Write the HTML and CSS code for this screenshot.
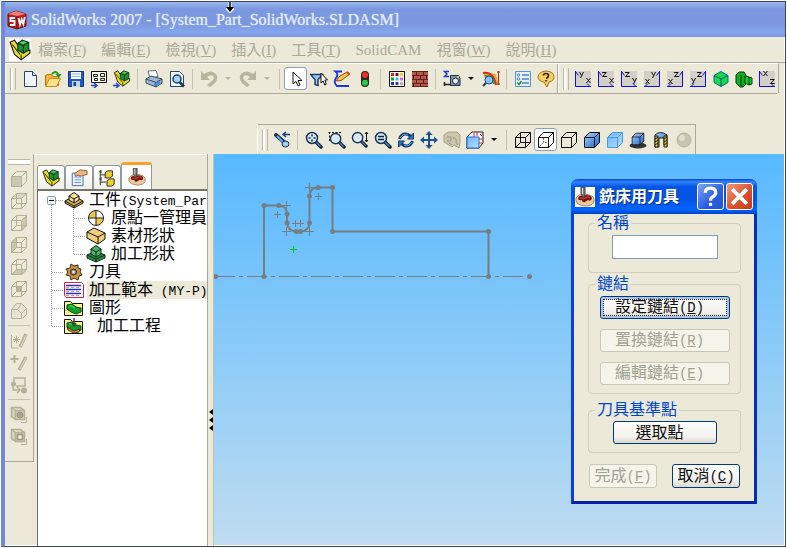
FILE: index.html
```html
<!DOCTYPE html>
<html lang="zh-Hant">
  <head>
    <meta charset="UTF-8">
    <meta name="viewport" content="width=device-width, initial-scale=1.0">
    <title>SolidWorks 2007</title>
    <link rel="stylesheet" href="styles.css">
  </head>
  <body>
    <!-- shared shapes -->
    <svg class="defs" aria-hidden="true">
      <defs>
        <linearGradient id="blue" x1="0" y1="0" x2="1" y2="1"><stop offset="0" stop-color="#a9d4fb"/><stop offset="1" stop-color="#1f62c4"/></linearGradient>
        <linearGradient id="lightblue" x1="0" y1="0" x2="1" y2="1"><stop offset="0" stop-color="#6db5fa"/><stop offset="1" stop-color="#b4e0ff"/></linearGradient>
        <symbol id="wire" viewBox="0 0 18 18"><path d="M1.500 6.500h10v10h-10zM6.500 1.500h10v10h-10zM1.500 6.500l5-5M11.500 6.500l5-5M11.500 16.500l5-5M1.500 16.500l5-5" fill="none" stroke="currentColor"/></symbol>
        <symbol id="box" viewBox="0 0 18 18"><path d="M1.500 6.500l5-5h10v10l-5 5h-10zM1.500 6.500h10v10M11.500 6.500l5-5" stroke="currentColor" stroke-linejoin="round"/></symbol>
        <symbol id="lens" viewBox="0 0 18 18"><path d="M10.500 10.500l5.500 5.500" stroke="#123" stroke-width="3.500" stroke-linecap="round"/><path d="M11 11l4.500 4.500" stroke="#4a90d8" stroke-width="1.200"/><circle cx="7" cy="7" r="5.500" fill="#d6ebfb" stroke="#1c3450" stroke-width="1.500"/></symbol>
        <symbol id="undo" viewBox="0 0 18 18"><path d="M1 1v9h9L7 7q3-3 6-1 2 2-1 5l-5 4 3 2 5-4q4-5 1-9-5-5-12 0z" fill="#b9b59c"/></symbol>
        <symbol id="corner-l" viewBox="0 0 18 18"><path d="M1 1h16v16H1z" fill="#d2d0c8"/><path d="M1.500 1v15.500H17M1.500 1.500l3 4M13 13.500l3 3" fill="none" stroke="#1010e0"/></symbol>
        <symbol id="corner-r" viewBox="0 0 18 18"><path d="M1 1h16v16H1z" fill="#d2d0c8"/><path d="M16.500 1v15.500H1M16.500 1.500l-3 4M5 13.500l-3 3" fill="none" stroke="#1010e0"/></symbol>
        <symbol id="gx" viewBox="0 0 5 5"><path d="M.5 0l4 5M4.500 0l-4 5" stroke="#111" fill="none"/></symbol>
        <symbol id="gy" viewBox="0 0 5 6"><path d="M.5 0l2 3.500M4.500 0l-3 6" stroke="#111" fill="none"/></symbol>
        <symbol id="gz" viewBox="0 0 5 5"><path d="M0 .5h4.200L.5 4.500H5" stroke="#111" fill="none"/></symbol>
        <symbol id="assembly" viewBox="0 0 20 20"><path d="M1 3l4-2 4 6 2 4 8-1v3l-8 6-6-5z" fill="#f6d52f" stroke="#111"/><path d="M8 4l4-3 6 2v7l-5 3-5-3z" fill="#1d8d37" stroke="#073b12"/><path d="M8 4l5 2 5-3M13 6v7M3 5l7 9M11 14v5" stroke="#083d14" fill="none"/><path d="M10 3.500l3-1.500 3 1-3 1.500z" fill="#5ed873"/></symbol>
        <symbol id="cutter" viewBox="0 0 20 20"><path d="M1 11q2-4 8-4 10 1 10 5v3q-2 4-9 4-8-1-9-5z" fill="#e8cc9a" stroke="#a8865a"/><path d="M3 11q1-3 5-2l3-1q5 0 6 3-1 4-4 2l-3 2q-3 1-3-2-4 1-4-2" fill="#7c1212"/><path d="M5 11q4 2 7-1 2 0 3 1" stroke="#d8503c" fill="none"/><path d="M6 0h4v6l-1 5H8L6 6z" fill="#777" stroke="#444"/><path d="M7.500 1v6" stroke="#ddd"/></symbol>
        <symbol id="twig-line" viewBox="0 0 22 18"><path d="M9.500 0v18" class="twig-dots"/></symbol>
        <symbol id="twig-mid" viewBox="0 0 22 18"><path d="M9.500 0v18M10 9.500h12" class="twig-dots"/></symbol>
        <symbol id="twig-end" viewBox="0 0 22 18"><path d="M9.500 0v9M10 9.500h12" class="twig-dots"/></symbol>
        <symbol id="twig-open" viewBox="0 0 22 18"><path d="M9.500 14v4M14 9.500h8" class="twig-dots"/><rect x="5.500" y="5.500" width="8" height="8" rx="1" fill="#f4f2ea" stroke="#7d97b5"/><path d="M7 9.500h5" stroke="#111"/></symbol>
        <symbol id="part-pic" viewBox="0 0 20 18"><path d="M.5 2.500h6l2 2h10v12H.5z" fill="#fdf58e" stroke="#111"/><path d="M3 6l5-1 4 3 5 1v4l-5 2-5-2-4-3z" fill="#12a02d" stroke="#064a12"/><path d="M5 7l3 0 3 2" stroke="#5be070" fill="none"/></symbol>
      </defs>
    </svg>

    <div class="app">
      <header class="titlebar">
        <svg class="logo" viewBox="0 0 20 20"><path d="M1 4l8-3 10 3v12l-9 3-9-3z" fill="#b81f1f" stroke="#701010"/><path d="M1 4l8-3 10 3-9 2z" fill="#ef7c70"/><path d="M10 6v13" stroke="#701010"/><path d="M8 8H3.500v3H7.500v4H3M11.500 8l1.500 6.500 1.700-5 1.600 4.500 1.500-7" fill="none" stroke="#fff" stroke-width="1.800"/></svg>
        <h1>SolidWorks 2007 - [System_Part_SolidWorks.SLDASM]</h1>
        <svg class="cursor" viewBox="0 0 10 11"><path d="M5 0v9M1.500 6L5 9.500 8.500 6" fill="none" stroke="#fff" stroke-width="3"/><path d="M5 0v7" stroke="#000" stroke-width="1.500"/><path d="M1 5h8L5 10z"/></svg>
      </header>

      <nav class="menubar">
        <svg class="menu-icon"><use href="#assembly"/></svg>
        <a href="#">檔案(<u>F</u>)</a>
        <a href="#">編輯(<u>E</u>)</a>
        <a href="#">檢視(<u>V</u>)</a>
        <a href="#">插入(<u>I</u>)</a>
        <a href="#">工具(<u>T</u>)</a>
        <a href="#">SolidCAM</a>
        <a href="#">視窗(<u>W</u>)</a>
        <a href="#">說明(<u>H</u>)</a>
      </nav>

      <div class="toolbars">
        <div class="toolbar">
          <span class="grip"></span>
          <button class="tool" aria-label="New"><svg viewBox="0 0 18 18"><path d="M3.500 1.500h8l4 4v11h-12z" fill="#f2f7ff" stroke="#24436e"/><path d="M11.500 1.500v4h4" fill="#c9dcf2" stroke="#24436e"/></svg></button>
          <button class="tool" aria-label="Open"><svg viewBox="0 0 18 18"><path d="M1.500 16V5.500l2-1h4l1 2h6v9z" fill="#f4b63e" stroke="#b9760c"/><path d="M1.500 16.500l4-8h11l-4 8z" fill="#ffe389" stroke="#c98a16"/><path d="M8 4q4-4 6 0" fill="none" stroke="#1c9a2c" stroke-width="2"/><path d="M11.500 4h6L15 8z" fill="#1c9a2c"/></svg></button>
          <button class="tool" aria-label="Save"><svg viewBox="0 0 18 18"><path d="M1.500 1.500h15v15h-15z" fill="#2458c8" stroke="#123488"/><path d="M4 2h10v7H4z" fill="#f4f8ff"/><path d="M5 4h8M5 6.500h8" stroke="#9ab3dc"/><path d="M5 11h8v6H5z" fill="#c8d4e8"/><path d="M6.500 12h2.500v4H6.500z" fill="#1c3f98"/></svg></button>
          <button class="tool" aria-label="Make drawing"><svg viewBox="0 0 18 18"><path d="M1.500 1.500h15v11h-15z" fill="#fff" stroke="#111"/><path d="M3.500 4.500h4v2h-4zM10.500 3.500h4v3h-4zM4.500 8.500h3v2h-3zM10.500 8.500h4v2h-4z" fill="#f4e9b8" stroke="#222"/><path d="M1 15.500h5M4 13l3 2.500L4 18" stroke="#1b49c8" fill="none" stroke-width="1.500"/></svg></button>
          <button class="tool" aria-label="Make assembly"><svg viewBox="0 0 18 18"><use href="#assembly" width="18" height="17"/><path d="M0 15.500h5M3 13l3 2.500L3 18" stroke="#1b49c8" fill="none" stroke-width="1.500"/></svg></button>
          <span class="sep"></span>
          <button class="tool" aria-label="Print"><svg viewBox="0 0 18 18"><path d="M3 1l8-.500 2 6-8 2z" fill="#fff" stroke="#56718f"/><path d="M1 9l5-3 11 3v4l-6 4L1 13z" fill="#9fb8d2" stroke="#34495f"/><path d="M1 9l10 3.500L17 9M11 12.500V17" stroke="#34495f" fill="none"/><path d="M9 15l6-3" stroke="#3d8be8" stroke-width="2"/></svg></button>
          <button class="tool" aria-label="Print preview"><svg viewBox="0 0 18 18"><path d="M2.500 1.500h9l4 4v11h-13z" fill="#f4f8ff" stroke="#24436e"/><path d="M11 11.500l5 5" stroke="#1d3e60" stroke-width="2.500"/><circle cx="9" cy="9" r="4" fill="#9fd4f5" stroke="#1d3e60" stroke-width="1.500"/></svg></button>
          <span class="sep"></span>
          <button class="tool" aria-label="Undo" disabled><svg><use href="#undo"/></svg></button>
          <button class="drop" aria-label="Undo list" disabled><svg viewBox="0 0 6 4"><path d="M0 0h6L3 3z"/></svg></button>
          <button class="tool" aria-label="Redo" disabled><svg viewBox="0 0 18 18"><g transform="translate(18 0) scale(-1 1)"><use href="#undo" width="18" height="18"/></g></svg></button>
          <button class="drop" aria-label="Redo list" disabled><svg viewBox="0 0 6 4"><path d="M0 0h6L3 3z"/></svg></button>
          <span class="sep"></span>
          <button class="tool pressed" aria-label="Select"><svg viewBox="0 0 18 18"><path d="M6 2v12l3-2.500 2 4.500 2-1-2-4.500h4z" fill="#fff" stroke="#111"/></svg></button>
          <button class="tool" aria-label="Selection filter"><svg viewBox="0 0 18 18"><path d="M.500 4.500h12l-4.500 5v6l-3-1v-5z" fill="#9cc9f0" stroke="#1f3f6b" stroke-width="1.500"/><path d="M11 3v10l2.200-2 1.500 4 1.500-.8L15 10h2.500z" fill="#fff" stroke="#111"/></svg></button>
          <button class="tool" aria-label="Sketch"><svg viewBox="0 0 18 18"><path d="M9 1.500H2.500Q6 4 3 8t1 8h12" fill="none" stroke="#1b35d8" stroke-width="1.800"/><path d="M3.500 11l2-4L14 2l2.500 2.500L8 10.500z" fill="#f7c548" stroke="#8a4a10"/><path d="M14 2l2.500 2.500" stroke="#d23c20" stroke-width="2"/></svg></button>
          <button class="tool" aria-label="Rebuild"><svg viewBox="0 0 18 18"><rect x="5" y="1" width="8" height="16" rx="4" fill="#262626"/><circle cx="9" cy="5" r="3" fill="#f03020"/><circle cx="9" cy="12.800" r="3" fill="#28d040"/></svg></button>
          <span class="sep"></span>
          <button class="tool" aria-label="Edit color"><svg viewBox="0 0 18 18"><path d="M1.500 1.500h15v15h-15z" fill="#fff" stroke="#111"/><path d="M3 3h3v3H3z" fill="#e02020"/><path d="M7.500 3h3v3h-3z" fill="#801010"/><path d="M12 3h3v3h-3z" fill="#f0d020"/><path d="M3 7.500h3v3H3z" fill="#18a020"/><path d="M7.500 7.500h3v3h-3z" fill="#20c8d0"/><path d="M12 7.500h3v3h-3z" fill="#e060d8"/><path d="M3 12h3v3H3z" fill="#1830d8"/><path d="M7.500 12h3v3h-3z" fill="#5030b0"/><path d="M12 12h3v3h-3z" fill="#b0b0b0"/></svg></button>
          <button class="tool" aria-label="Texture"><svg viewBox="0 0 18 18"><path d="M1 1h16v16H1z" fill="#b5584c"/><path d="M1 1.500h16M1 5.500h16M1 9.500h16M1 13.500h16M1 16.500h16M5.500 1v4M12.500 1v4M2.500 5v4M9.500 5v4M15.500 5v4M5.500 9v4M12.500 9v4M2.500 13v4M9.500 13v4" stroke="#5f211a"/></svg></button>
          <span class="sep"></span>
          <button class="tool" aria-label="Measure"><svg viewBox="0 0 18 18"><path d="M6 1.500H1.500L4 4 1.500 6.500H6" fill="none" stroke="#1b35c8" stroke-width="1.300"/><path d="M7.500 5.500h8l1.500 3v7H7.500z" fill="#7d94ac" stroke="#18304c"/><circle cx="12.500" cy="11" r="3" fill="#e4f0fa" stroke="#18304c"/><path d="M1 14.500h7M1.500 12v4" stroke="#222" stroke-width="1.500"/><path d="M14 6h2v2h-2z" fill="#f0d040"/></svg></button>
          <button class="drop" aria-label="Measure list"><svg viewBox="0 0 6 4"><path d="M0 0h6L3 3z"/></svg></button>
          <button class="tool" aria-label="Analysis"><svg viewBox="0 0 18 18"><path d="M1 2l5 1 8 1 3 11-4-1-3-5-8-2z" fill="#e8b030"/><path d="M1 3q10-2 13 12" fill="none" stroke="#e02818" stroke-width="2"/><path d="M3 6q8-1 9 8" fill="none" stroke="#24a850" stroke-width="2"/><path d="M16.500 1v14M15 2h3M15 14h3" stroke="#c02018"/><path d="M5 12l-4 4" stroke="#1d3e60" stroke-width="2"/><circle cx="7" cy="10" r="4" fill="#88c4f2" stroke="#205088"/></svg></button>
          <span class="sep"></span>
          <button class="tool" aria-label="Options"><svg viewBox="0 0 18 18"><path d="M1.500 1.500h15v15h-15z" fill="#e4f0fd" stroke="#5a92d8"/><path d="M8 5h7M8 9h7M8 13h7" stroke="#4c84cc" stroke-width="1.500"/><circle cx="4.500" cy="5" r="1.200" fill="none" stroke="#4c84cc"/><circle cx="4.500" cy="9" r="1.200" fill="none" stroke="#4c84cc"/><path d="M3 12.500l2 2 2.500-3.500" fill="none" stroke="#18a020" stroke-width="1.500"/></svg></button>
          <button class="tool" aria-label="Help"><svg viewBox="0 0 18 18"><path d="M9 1q8 .5 8 6 0 4-5 5l-2 5-3-5Q1 11 1 7q1-5.500 8-6" fill="#f7cf62" stroke="#a87010"/><path d="M6.500 5.500q0-2 2.500-2t2.500 2-2.500 3M9 10v1.500" fill="none" stroke="#332200" stroke-width="1.700"/></svg></button>
        </div>
        <div class="toolbar">
          <span class="grip"></span>
          <button class="tool" aria-label="View YX"><svg viewBox="0 0 18 18"><use href="#corner-l" width="18" height="18"/><use href="#gy" x="5" y="2" width="5" height="6"/><use href="#gx" x="12" y="8" width="5" height="5"/></svg></button>
          <button class="tool" aria-label="View ZX"><svg viewBox="0 0 18 18"><use href="#corner-l" width="18" height="18"/><use href="#gz" x="5" y="2" width="5" height="5"/><use href="#gx" x="12" y="8" width="5" height="5"/></svg></button>
          <button class="tool" aria-label="View ZY"><svg viewBox="0 0 18 18"><use href="#corner-l" width="18" height="18"/><use href="#gz" x="5" y="2" width="5" height="5"/><use href="#gy" x="12" y="8" width="5" height="6"/></svg></button>
          <button class="tool" aria-label="View XY"><svg viewBox="0 0 18 18"><use href="#corner-r" width="18" height="18"/><use href="#gy" x="8" y="2" width="5" height="6"/><use href="#gx" x="2" y="9" width="5" height="5"/></svg></button>
          <button class="tool" aria-label="View XZ"><svg viewBox="0 0 18 18"><use href="#corner-r" width="18" height="18"/><use href="#gz" x="8" y="2" width="5" height="5"/><use href="#gx" x="2" y="9" width="5" height="5"/></svg></button>
          <button class="tool" aria-label="View YZ"><svg viewBox="0 0 18 18"><use href="#corner-r" width="18" height="18"/><use href="#gz" x="8" y="2" width="5" height="5"/><use href="#gy" x="2" y="8" width="5" height="6"/></svg></button>
          <button class="tool" aria-label="Isometric"><svg viewBox="0 0 18 18"><path d="M9 1.500l7 4v7l-7 4-7-4v-7z" fill="#18d850" stroke="#067080"/><path d="M2 5.500l7 3.500 7-3.500M9 9v7.500" stroke="#065a60" fill="none"/></svg></button>
          <button class="tool" aria-label="Part"><svg viewBox="0 0 18 18"><path d="M1 5l3-3h5l2 3v9l-3 3H5l-4-4z" fill="#0cae20" stroke="#043c08"/><path d="M10 6l4 1 3 1v6l-3 1-4-2z" fill="#16d02c" stroke="#043c08"/><path d="M6 5v11M14 7v8" stroke="#043c08"/></svg></button>
          <button class="tool" aria-label="View XZ"><svg viewBox="0 0 18 18"><use href="#corner-l" width="18" height="18"/><use href="#gx" x="5" y="1" width="5" height="5"/><use href="#gz" x="12" y="9" width="5" height="5"/></svg></button>
        </div>
      </div>

      <div class="view-row">
        <div class="toolbar view-toolbar">
          <span class="grip"></span>
          <button class="tool" aria-label="Previous view"><svg viewBox="0 0 18 18"><path d="M3 4l9 8" stroke="#19304a" stroke-width="4" stroke-linecap="round"/><path d="M4 5l8 8" stroke="#62b0ec" stroke-width="2"/><ellipse cx="12.500" cy="13" rx="3.500" ry="3" fill="#9cd0f5" stroke="#19304a"/><path d="M10 3.500h7M13 1l-3 2.500L13 6" stroke="#173f8a" fill="none" stroke-width="1.500"/></svg></button>
          <span class="sep"></span>
          <button class="tool" aria-label="Zoom to fit"><svg viewBox="0 0 18 18"><use href="#lens" width="18" height="18"/><path d="M7 3.500v2M7 8.500v2M3.500 7h2M8.500 7h2" stroke="#123" stroke-width="1.500"/></svg></button>
          <button class="tool" aria-label="Zoom to area"><svg viewBox="0 0 18 18"><use href="#lens" x="1" y="1" width="17" height="17"/><path d="M.5 1.500h14M1.500 1v10" stroke="#111" stroke-dasharray="2 1.500"/></svg></button>
          <button class="tool" aria-label="Zoom in or out"><svg viewBox="0 0 18 18"><use href="#lens" width="17" height="17"/><path d="M15.500 1v10M14 3l1.500-2L17 3M14 9l1.500 2L17 9" stroke="#111" fill="none"/></svg></button>
          <button class="tool" aria-label="Zoom to selection"><svg viewBox="0 0 18 18"><use href="#lens" width="18" height="18"/><path d="M4 5.500h6M4 8.500h6" stroke="#123" stroke-width="1.500"/></svg></button>
          <button class="tool" aria-label="Rotate view"><svg viewBox="0 0 18 18"><path d="M2.500 8Q5 1.500 11 3.500l3 2M15.500 10Q13 16.500 7 14.500l-3-2" fill="none" stroke="#153c70" stroke-width="3"/><path d="M16.500 2v6h-6zM1.500 16v-6h6z" fill="#2b78c8" stroke="#153c70"/><path d="M3 7Q6 2 11 4M15 11Q12 16 7 14" fill="none" stroke="#63b2ee"/></svg></button>
          <button class="tool" aria-label="Pan"><svg viewBox="0 0 18 18"><path d="M9 3v12M3 9h12" stroke="#1b4f96" stroke-width="2"/><path d="M9 0l3.500 4h-7zM9 18l3.500-4h-7zM0 9l4-3.500v7zM18 9l-4-3.500v7z" fill="#1b4f96"/></svg></button>
          <button class="tool" aria-label="3D drawing view" disabled><svg viewBox="0 0 18 18"><path d="M1 4l4-3h9l3 3v8l-1 5-5-3-2 2-8-5z" fill="#cbc7ae" stroke="#aaa68a"/><path d="M4 6h4v4H4M10 7q4 0 3 4l2 3M6 12l3 2" fill="none" stroke="#98947a"/></svg></button>
          <button class="tool" aria-label="Standard views"><svg viewBox="0 0 18 18"><path d="M1 6l5-5h11v11l-4 5H1z" fill="#fff" stroke="#222"/><path d="M1 6h12v11H1z" fill="url(#lightblue)" stroke="#2468d8"/><path d="M8 2v4M11 1v4M13 8h4M14 3l2 2M13 12h3" stroke="#d02040"/></svg></button>
          <button class="drop" aria-label="Standard views list"><svg viewBox="0 0 6 4"><path d="M0 0h6L3 3z"/></svg></button>
          <span class="sep"></span>
          <button class="tool" aria-label="Wireframe"><svg><use href="#wire"/></svg></button>
          <button class="tool pressed" aria-label="Hidden lines visible"><svg viewBox="0 0 18 18"><use href="#box" width="18" height="18" fill="#fff"/><path d="M6.500 7v4.500h5M6 12l-4 4" fill="none" stroke="#777" stroke-dasharray="2 1"/></svg></button>
          <button class="tool" aria-label="Hidden lines removed"><svg><use href="#box" fill="none"/></svg></button>
          <button class="tool" aria-label="Shaded with edges"><svg><use href="#box" fill="url(#blue)"/></svg></button>
          <button class="tool shaded" aria-label="Shaded"><svg><use href="#box" fill="url(#lightblue)"/></svg></button>
          <button class="tool" aria-label="Shadows"><svg viewBox="0 0 18 18"><ellipse cx="9" cy="14.500" rx="8.500" ry="3" fill="#333"/><use href="#box" x="2" y="1" width="14" height="14" fill="url(#blue)"/></svg></button>
          <button class="tool" aria-label="Section view"><svg viewBox="0 0 18 18"><path d="M3 4q5-5 12 0v12l-3-2V7H7v9H3z" fill="url(#blue)" stroke="#122"/><path d="M3 5h3v11H3zM12 5h3v11h-3z" fill="#f0c818" stroke="#222"/><path d="M3 8l3-2M3 11l3-2M3 14l3-2M12 8l3-2M12 11l3-2M12 14l3-2" stroke="#222"/></svg></button>
          <button class="tool" aria-label="RealView" disabled><svg viewBox="0 0 18 18"><circle cx="9" cy="9" r="7" fill="#c9c5b0" stroke="#b4b09a"/><circle cx="7" cy="7" r="3" fill="#e2dfd0"/></svg></button>
        </div>
      </div>

      <main class="workspace">
        <div class="side-tools">
          <span class="grip-h"></span>
          <button class="side-tool" aria-label="Front" disabled><svg viewBox="0 0 18 18"><path d="M1 6h11v11H1z" fill="#cbc8b0"/><use href="#box" fill="none" width="18" height="18"/></svg></button>
          <button class="side-tool" aria-label="Back" disabled><svg viewBox="0 0 18 18"><path d="M1 6l5-5h11l-5 5z" fill="#d9d6c2"/><use href="#wire" width="18" height="18"/></svg></button>
          <button class="side-tool" aria-label="Left" disabled><svg viewBox="0 0 18 18"><path d="M12 6l5-5v11l-5 5z" fill="#cbc8b0"/><use href="#wire" width="18" height="18"/></svg></button>
          <button class="side-tool" aria-label="Right" disabled><svg viewBox="0 0 18 18"><path d="M1 6l5-5v11l-5 5z" fill="#cbc8b0"/><use href="#wire" width="18" height="18"/></svg></button>
          <button class="side-tool" aria-label="Bottom" disabled><svg viewBox="0 0 18 18"><path d="M1 17l5-5h11l-5 5z" fill="#cbc8b0"/><use href="#wire" width="18" height="18"/></svg></button>
          <button class="side-tool" aria-label="Top" disabled><svg viewBox="0 0 18 18"><path d="M6 6h6v6H6z" fill="#b9b59c"/><use href="#wire" width="18" height="18"/></svg></button>
          <button class="side-tool" aria-label="Normal to" disabled><svg viewBox="0 0 18 18"><path d="M1.500 7.500l5-6h5l5 5v6l-4 4h-11zM1.500 7.500h6l4 4v5M7.500 7.500l4-6M11.500 11.500l5-5" fill="#e6e3d2" stroke="currentColor"/></svg></button>
          <span class="sep-h"></span>
          <button class="side-tool" aria-label="New sketch" disabled><svg viewBox="0 0 18 18"><path d="M1.500 3v13h7M4 5l5 5M9 5l-5 5M6.500 3.500v8M3 7.500h7" stroke="currentColor" fill="none"/><path d="M16 2l-6 13" stroke="currentColor" stroke-width="3.500"/><path d="M16 3l-5 11" stroke="#dedbc8"/></svg></button>
          <button class="side-tool" aria-label="Point" disabled><svg viewBox="0 0 18 18"><path d="M4.500 1v8M.5 5h8" stroke="currentColor" stroke-width="2"/><path d="M16 3L9 16" stroke="currentColor" stroke-width="3.500"/><path d="M16 4l-6 11" stroke="#dedbc8"/></svg></button>
          <button class="side-tool" aria-label="Route" disabled><svg viewBox="0 0 18 18"><path d="M4 6V2h11v8H6M3 9v5h6M7 11l3 3-3 3" fill="none" stroke="currentColor" stroke-width="1.500"/><circle cx="3.500" cy="8" r="2.500" fill="currentColor"/><circle cx="14" cy="14.500" r="3" fill="currentColor"/></svg></button>
          <span class="sep-h"></span>
          <button class="side-tool" aria-label="Block" disabled><svg viewBox="0 0 18 18"><path d="M1.500 1.500h9l4 3v9h-9l-4-3zM1.500 1.500l4 3h9M5.500 4.500v9" fill="#d6d3be" stroke="currentColor" stroke-width="1.500"/><circle cx="10" cy="9" r="3" fill="#aaa68c" stroke="#98947a"/><path d="M11 16.500h5.500V11" fill="none" stroke="currentColor"/></svg></button>
          <button class="side-tool" aria-label="Pattern" disabled><svg viewBox="0 0 18 18"><path d="M1.500 1.500h9l4 3v9h-9l-4-3zM1.500 1.500l4 3h9M5.500 4.500v9" fill="#d6d3be" stroke="currentColor" stroke-width="1.500"/><path d="M7.500 6.500h5v5h-5z" fill="#f1efe4" stroke="#98947a" stroke-width="1.500"/><path d="M11 16.500h5.500V11" fill="none" stroke="currentColor"/></svg></button>
        </div>

        <section class="manager">
          <div class="tabs">
            <button class="tab" aria-label="Assembly"><svg><use href="#assembly"/></svg></button>
            <button class="tab" aria-label="Properties"><svg viewBox="0 0 20 20"><path d="M2.500 4.500h12v14h-12z" fill="#eef5ff" stroke="#3468b8"/><path d="M5 9h7M5 12h7M5 15h7" stroke="#5a88d0"/><path d="M5 5l6-4 8 1v4l-7 2-3-1-3 1z" fill="#e8b684" stroke="#8f5a2c"/></svg></button>
            <button class="tab" aria-label="Configurations"><svg viewBox="0 0 20 20"><path d="M2.500 1v17M3 6.500h6M3 14.500h6" stroke="#222" fill="none"/><path d="M1 3l3-2v4zM1 11l3-2v4z" fill="#444"/><path d="M8 4l3-2h5v6l-3 2H8zM10 13l3-2h5v6l-3 2h-5z" fill="#f0cf2c" stroke="#222"/></svg></button>
            <button class="tab active" aria-label="CAM"><svg><use href="#cutter"/></svg></button>
          </div>
          <div class="tree">
            <div class="row"><svg class="twig"><use href="#twig-open"/></svg><svg class="node" viewBox="0 0 20 18"><path d="M1 10l9-5 9 5v2l-9 5-9-5z" fill="#d9b44c" stroke="#111"/><path d="M1 10l9 5 9-5M10 15v2" stroke="#111" fill="none"/><path d="M5 5l5-3.500L15 5v4l-5 3-5-3z" fill="#f6e292" stroke="#111"/><path d="M5 5l5 3 5-3M10 8v4" stroke="#111" fill="none"/></svg><span class="label">工件<span class="latin">(System_Par</span></span></div>
            <div class="row"><svg class="twig"><use href="#twig-line"/></svg><svg class="twig"><use href="#twig-mid"/></svg><svg class="node" viewBox="0 0 20 18"><circle cx="10" cy="9" r="7.500" fill="#fff"/><path d="M10 9V1.500A7.500 7.500 0 0 0 2.500 9zM10 9v7.500A7.500 7.500 0 0 0 17.500 9z" fill="#f5c44a"/><circle cx="10" cy="9" r="7.500" fill="none" stroke="#222"/><path d="M10 1v16M2 9h16" stroke="#222"/></svg><span class="label">原點一管理員</span></div>
            <div class="row"><svg class="twig"><use href="#twig-line"/></svg><svg class="twig"><use href="#twig-mid"/></svg><svg class="node" viewBox="0 0 20 18"><path d="M1 5l7-4 11 5v6l-7 5L1 11z" fill="#f0cf78" stroke="#111"/><path d="M1 5l11 5 7-4M12 10v7" stroke="#111" fill="none"/></svg><span class="label">素材形狀</span></div>
            <div class="row"><svg class="twig"><use href="#twig-line"/></svg><svg class="twig"><use href="#twig-end"/></svg><svg class="node" viewBox="0 0 20 18"><path d="M1 10l9-4 9 4v3l-9 4-9-4z" fill="#2d8a48" stroke="#0a2c14"/><path d="M1 10l9 4 9-4M10 14v3" fill="none" stroke="#0a2c14"/><path d="M5 4l5-3.500L15 4v5l-5 3-5-3z" fill="#4bb26a" stroke="#0a2c14"/><path d="M5 4l5 3 5-3M10 7v5" fill="none" stroke="#0a2c14"/></svg><span class="label">加工形狀</span></div>
            <div class="row"><svg class="twig"><use href="#twig-mid"/></svg><svg class="node" viewBox="0 0 20 18"><path d="M7 1l3 2 4-1v3l3 1-1 3 2 3-3 1-1 4-4-2-3 2-1-4-4-1 2-3-2-3 4-1z" fill="#c9954c" stroke="#3b260c"/><circle cx="9.500" cy="9" r="3" fill="#a09078" stroke="#2b1b08"/><circle cx="9.500" cy="9" r="1.200" fill="#fff"/></svg><span class="label">刀具</span></div>
            <div class="row"><svg class="twig"><use href="#twig-mid"/></svg><svg class="node" viewBox="0 0 20 18"><path d="M.500 1.500h17l2 2v13H2l-1.500-2z" fill="#fff" stroke="#d8203c"/><path d="M2 4.500h15M2 8.500h15M2 12.500h15" stroke="#1b35c8" stroke-width="1.500"/><path d="M2 6.500h15M2 10.500h15M2 14.500h15" stroke="#e28a98" stroke-dasharray="3 2"/></svg><span class="label selected">加工範本<span class="latin"> (MY-P)</span></span></div>
            <div class="row"><svg class="twig"><use href="#twig-mid"/></svg><svg class="node"><use href="#part-pic"/></svg><span class="label">圖形</span></div>
            <div class="row"><svg class="twig"><use href="#twig-end"/></svg><svg class="node" viewBox="0 0 20 18"><use href="#part-pic" width="20" height="18"/><path d="M3 10l7 4 6-2-1 3-5 1-6-3z" fill="#d69a3c" stroke="#432"/><path d="M10 1v6M8 6l2 3 2-3" stroke="#444" fill="none" stroke-width="1.500"/></svg><span class="label">&nbsp;&nbsp;加工工程</span></div>
          </div>
        </section>

        <div class="splitter">
          <svg viewBox="0 0 4 24"><path d="M4 1v6L0 4zM4 9v6l-4-3zM4 17v6l-4-3z"/></svg>
        </div>

        <section class="canvas">
          <svg class="sketch" viewBox="214 154 330 150">
            <path d="M264 276V205.500H279Q287 206 287 214V223Q288 231 296 231.500H300Q309 231 309.500 223V196Q310 187.500 318 187.500H332.500V231.500H488.500V276" fill="none" stroke="#777d80" stroke-width="2"/>
            <path d="M215 276.500H529" stroke="#777d80" stroke-dasharray="20 4 4 4" fill="none"/>
            <g fill="#777d80">
              <circle cx="264" cy="205.500" r="2.500"/><circle cx="279" cy="205.500" r="2.500"/><circle cx="287" cy="214" r="2.500"/><circle cx="287" cy="223" r="2.500"/>
              <circle cx="296" cy="231.500" r="2.500"/><circle cx="300.500" cy="231.500" r="2.500"/><circle cx="309.500" cy="223" r="2.500"/><circle cx="309.500" cy="196" r="2.500"/>
              <circle cx="318" cy="187.500" r="2.500"/><circle cx="332.500" cy="187.500" r="2.500"/><circle cx="332.500" cy="231.500" r="2.500"/><circle cx="488.500" cy="231.500" r="2.500"/>
              <circle cx="488.500" cy="276.500" r="2.500"/><circle cx="264" cy="276.500" r="2.500"/><circle cx="215.500" cy="276.500" r="2.500"/><circle cx="529.500" cy="276.500" r="2.500"/>
            </g>
            <path d="M282 205.500h9M286.500 201v9M274 214.500h7M277.500 211v7M282 231.500h9M286.500 227v9M292 223.500h7M295.500 220v7M297 223.500h7M300.500 220v7M305 231.500h9M309.500 227v9M305 187.500h9M309.500 183v9M315 196.500h7M318.500 193v7" stroke="#777d80"/>
            <path d="M290 249.500h7M293.500 246v7" stroke="#00c81e"/>
          </svg>

          <form class="dialog" onsubmit="return false">
            <div class="dialog-title">
              <svg class="dialog-icon"><use href="#cutter"/></svg>
              <h2>銑床用刀具</h2>
              <button type="button" class="caption help" aria-label="Help"><svg viewBox="0 0 20 20"><path d="M5 6.500Q5 2 10 2t5 4.500Q15 9 12 10.500 10 11.500 10 14" fill="none" stroke="#fff" stroke-width="3"/><path d="M8.500 16h3v3h-3z" fill="#fff"/></svg></button>
              <button type="button" class="caption close" aria-label="Close"><svg viewBox="0 0 20 20"><path d="M3 3l14 14M17 3L3 17" stroke="#fff" stroke-width="3.500"/></svg></button>
            </div>
            <div class="dialog-body">
              <fieldset class="group-name">
                <legend><label for="toolname">名稱</label></legend>
                <input type="text" id="toolname">
              </fieldset>
              <fieldset class="group-link">
                <legend>鏈結</legend>
                <button type="button" class="btn wide focused">設定鏈結<span class="latin">(<u>D</u>)</span></button>
                <button type="button" class="btn wide" disabled>置換鏈結<span class="latin">(<u>R</u>)</span></button>
                <button type="button" class="btn wide" disabled>編輯鏈結<span class="latin">(<u>E</u>)</span></button>
              </fieldset>
              <fieldset class="group-base">
                <legend>刀具基準點</legend>
                <button type="button" class="btn pick">選取點</button>
              </fieldset>
              <div class="actions">
                <button type="submit" class="btn" disabled>完成<span class="latin">(<u>F</u>)</span></button>
                <button type="button" class="btn">取消<span class="latin">(<u>C</u>)</span></button>
              </div>
            </div>
          </form>
        </section>
      </main>
    </div>
  </body>
</html>
```

FILE: styles.css
```css
* {
  box-sizing: border-box;
}
body {
  margin: 0;
  padding: 1px;
  background: #fff;
  font-family: "Liberation Serif", "Noto Sans CJK TC", serif;
  font-size: 16px;
}
svg {
  display: block;
}
.defs {
  position: absolute;
  width: 0;
  height: 0;
}
button {
  margin: 0;
  padding: 0;
  border: 0;
  background: none;
  color: #111;
  font-family: inherit;
}

/* main window */
.app {
  display: flex;
  flex-direction: column;
  height: calc(100vh - 2px);
  background: #ece9d8;
  border: 1px solid #3c4650;
  border-left: 4px solid #7388d8;
  box-shadow: inset -1px -1px #fff;
}
.titlebar {
  position: relative;
  display: flex;
  align-items: center;
  gap: 4px;
  height: 35px;
  padding-left: 2px;
  background: linear-gradient(#9db9ee, #7b98e0 20%, #7b96df 60%, #83a6ec 85%, #7b98e0);
}
.logo {
  width: 20px;
  height: 20px;
}
h1 {
  margin: 0;
  color: #e2ebfc;
  font-size: 16px;
  font-weight: normal;
  text-shadow: 0 0 1px #dbe6fb;
  white-space: nowrap;
}
.cursor {
  position: absolute;
  left: 220px;
  top: 0;
  width: 10px;
  height: 11px;
}
.menubar {
  display: flex;
  align-items: center;
  gap: 15px;
  height: 26px;
  padding-left: 4px;
  border-bottom: 1px solid #aca899;
}
.menubar a {
  color: #aca899;
  font-size: 15px;
  line-height: 24px;
  text-decoration: none;
  white-space: nowrap;
}
.menu-icon {
  width: 22px;
  height: 22px;
  margin-right: -8px;
  background: #fff;
}

/* toolbars */
.toolbars {
  display: flex;
  height: 31px;
  margin-right: 8px;
  border-top: 1px solid #fff;
  border-bottom: 1px solid #aca899;
}
.toolbar {
  display: flex;
  align-items: center;
  padding-left: 4px;
  border-left: 1px solid #fff;
  border-right: 1px solid #aca899;
}
.grip {
  width: 6px;
  height: 22px;
  margin-right: 2px;
  border: solid #bdb9a6;
  border-width: 0 1px;
  background: linear-gradient(90deg, #fff 50%, #ece9d8 50%);
}
.tool {
  display: flex;
  align-items: center;
  justify-content: center;
  width: 23px;
  height: 23px;
}
.tool svg {
  flex: none;
  width: 18px;
  height: 18px;
}
.tool.pressed {
  background: #fff;
  border: 1px solid #8ba0b8;
  border-radius: 3px;
}
.tool.shaded {
  color: #4a98e8;
}
.drop {
  display: flex;
  justify-content: center;
  width: 16px;
}
.drop svg {
  width: 6px;
  height: 4px;
}
.drop:disabled svg {
  fill: #b9b59c;
}
.sep {
  width: 1px;
  height: 20px;
  margin: 0 4px;
  background: #c5c2b0;
}
.view-row {
  display: flex;
  height: 60px;
  padding-top: 30px;
  padding-left: 252px;
}
.view-toolbar {
  border-top: 1px solid #aca899;
}

/* work area */
.workspace {
  flex: 1;
  display: flex;
  min-height: 0;
}
.side-tools {
  display: flex;
  flex-direction: column;
  align-items: center;
  align-self: flex-start;
  width: 29px;
  height: 308px;
  padding-top: 5px;
  border-right: 1px solid #aca899;
  border-bottom: 1px solid #aca899;
}
.grip-h {
  width: 22px;
  height: 6px;
  margin-bottom: 3px;
  border: solid #bdb9a6;
  border-width: 1px 0;
  background: #fff;
}
.side-tool {
  display: flex;
  align-items: center;
  justify-content: center;
  width: 22px;
  height: 22px;
  color: #b5b198;
}
.side-tool svg {
  width: 18px;
  height: 18px;
}
.sep-h {
  width: 22px;
  height: 1px;
  margin: 3px 0 4px;
  background: #c5c2b0;
}
.manager {
  display: flex;
  flex-direction: column;
  width: 173px;
  padding-top: 4px;
  padding-left: 3px;
  border-top: 1px solid #fff;
}
.tabs {
  display: flex;
  align-items: flex-end;
  height: 30px;
}
.tab {
  display: flex;
  align-items: center;
  justify-content: center;
  width: 28px;
  height: 24px;
  background: linear-gradient(#fff, #f0f0ea);
  border: 1px solid #919b9c;
  border-bottom: 0;
  border-radius: 3px 3px 0 0;
}
.tab svg {
  width: 18px;
  height: 18px;
}
.tab.active {
  width: 31px;
  height: 27px;
  background: #fcfcfe;
  border-top: 3px solid #f4a22c;
}
.tree {
  flex: 1;
  padding-left: 4px;
  overflow: hidden;
  background: #fff;
  border-top: 2px solid #777468;
  border-left: 1px solid #716f64;
}
.row {
  display: flex;
  height: 18px;
  white-space: nowrap;
}
.twig {
  flex: none;
  width: 22px;
  height: 18px;
}
.twig-dots {
  fill: none;
  stroke: #999;
  stroke-dasharray: 1 1;
}
.node {
  flex: none;
  width: 20px;
  height: 18px;
  margin-right: 3px;
}
.label {
  flex: 1;
  padding-left: 2px;
  line-height: 18px;
}
.label.selected {
  background: #ece9d8;
}
.latin {
  font-family: "Liberation Mono", monospace;
  font-size: 13px;
}
.splitter {
  display: flex;
  flex-direction: column;
  justify-content: center;
  align-items: flex-end;
  width: 7px;
  padding-top: 140px;
  border-left: 1px solid #aca899;
  border-right: 1px solid #b9c4b4;
}
.splitter svg {
  width: 4px;
  height: 24px;
}
.canvas {
  position: relative;
  flex: 1;
  margin: 0 1px 1px 0;
  background: linear-gradient(#57b9ff, #bfdcf0);
}
.sketch {
  width: 330px;
  height: 150px;
}

/* tool dialog */
.dialog {
  position: absolute;
  top: 25px;
  right: 27px;
  width: 186px;
  background: #ece9d8;
  border: 3px solid #0a3fdc;
  border-top: 0;
  border-right-color: #0a2cb4;
  border-bottom-color: #0a22a8;
  border-radius: 7px 7px 0 0;
}
.dialog-title {
  display: flex;
  align-items: center;
  gap: 2px;
  height: 35px;
  margin: 0 -3px;
  padding: 0 4px;
  background: linear-gradient(#0a46c8, #2f82fb 8%, #0556e4 22%, #0554e6 60%, #0466fb 88%, #0341c6);
  border-radius: 7px 7px 0 0;
}
.dialog-icon {
  width: 20px;
  height: 20px;
  background: #fff;
}
h2 {
  flex: 1;
  margin: 0;
  padding-left: 2px;
  color: #fff;
  font-size: 16px;
  font-weight: bold;
  line-height: 24px;
  text-shadow: 1px 1px #0a2c88;
}
.caption {
  display: flex;
  align-items: center;
  justify-content: center;
  width: 27px;
  height: 27px;
  border: 1px solid #fff;
  border-radius: 3px;
}
.caption svg {
  width: 21px;
  height: 21px;
}
.help {
  background: linear-gradient(135deg, #7ea4f6, #2a5ee0 60%, #2455d0);
}
.close {
  background: linear-gradient(135deg, #f09a7c, #dc4c28 60%, #c83c18);
}
.dialog-body {
  padding: 0 13px 13px 14px;
}
fieldset {
  display: flex;
  flex-direction: column;
  align-items: center;
  min-width: 0;
  margin: 0 0 2px;
  padding: 0 10px;
  border: 1px solid #d0d0bf;
  border-radius: 4px;
}
legend {
  padding: 0 2px;
  margin-left: -4px;
  color: #0046d5;
  line-height: 18px;
}
.group-name {
  padding-top: 3px;
  padding-bottom: 13px;
}
.group-name input {
  width: 106px;
  height: 24px;
  padding: 2px 4px;
  background: #fff;
  border: 1px solid #7f9db9;
}
.group-link {
  gap: 10px;
  padding-top: 3px;
  padding-bottom: 8px;
  margin-bottom: 7px;
}
.group-base {
  padding-top: 2px;
  padding-bottom: 8px;
}
.btn {
  height: 23px;
  background: linear-gradient(#fff, #f2f1ec 70%, #dcd8cc);
  border: 1px solid #003c74;
  border-radius: 3px;
  font-size: 16px;
  line-height: 20px;
  white-space: nowrap;
}
.btn .latin {
  font-size: 14px;
}
.btn:disabled {
  background: #f5f4ea;
  border-color: #c9c7ba;
  color: #a1a192;
}
.btn.wide {
  width: 130px;
  padding-right: 10px;
}
.btn.focused {
  box-shadow: inset 0 0 0 2px #a9c2ee;
  outline: 1px dotted #223;
  outline-offset: -4px;
}
.btn.pick {
  width: 104px;
  padding-right: 10px;
}
.actions {
  display: flex;
  justify-content: space-between;
  padding: 9px 1px 0;
}
.actions .btn {
  width: 68px;
  height: 24px;
}
```
